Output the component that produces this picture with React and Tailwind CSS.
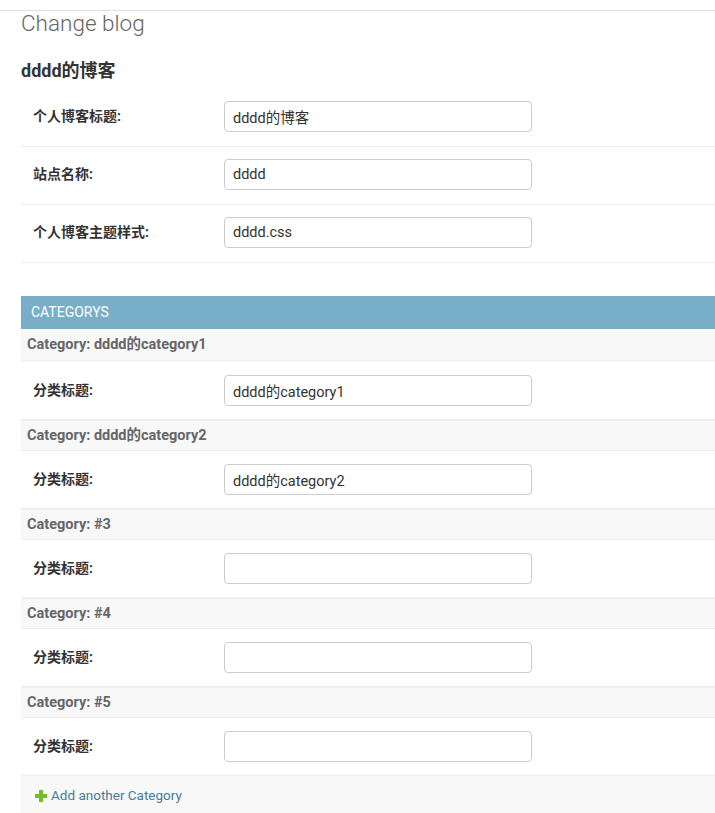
import React from "react";

const font = { fontFamily: 'Roboto, "Noto Sans CJK SC", sans-serif' };

function FieldRow({ label, value, inline, tall }) {
    const rowClass = inline
        ? "flex items-center " + (tall ? "h-[58px]" : "h-[57px]")
        : "flex items-start pt-[12px] h-[58px] border-b border-[#eee]";
    return (
        <div className={rowClass}>
            <label className="w-[203px] pl-3 text-[14px] font-bold text-[#333] leading-[31px]">{label}</label>
            <input
                readOnly
                value={value}
                className="w-[308px] h-[31px] border border-[#ccc] rounded-[4px] px-2 text-[14.5px] text-[#333] outline-none"
                style={font}
            />
        </div>
    );
}

function InlineItem({ title, value, first }) {
    return (
        <div>
            <div className={"flex items-center h-[32px] bg-[#f8f8f8] border-b border-[#eee] px-[6px] text-[14.5px] font-bold text-[#666] " + (first ? "" : "border-t-2 border-t-[#eee]")}>
                {title}
            </div>
            <FieldRow label="分类标题:" value={value} inline tall={first} />
        </div>
    );
}

function PlusIcon() {
    return (
        <svg width="12" height="12" viewBox="0 0 12 12">
            <rect x="4" y="0" width="4" height="12" fill="#70bf2b" />
            <rect x="0" y="4" width="12" height="4" fill="#70bf2b" />
        </svg>
    );
}

export default function App() {
    const categories = [
        { title: "Category: dddd的category1", value: "dddd的category1" },
        { title: "Category: dddd的category2", value: "dddd的category2" },
        { title: "Category: #3", value: "" },
        { title: "Category: #4", value: "" },
        { title: "Category: #5", value: "" },
    ];

    return (
        <div className="bg-white min-h-screen pt-[10px] overflow-hidden" style={font}>
            <div className="border-t border-[#e0e0e0] pl-[21px]">
                <h1 className="text-[22.5px] font-light text-[#666] leading-[22px] pt-[1px]">Change blog</h1>
                <h2 className="mt-[27px] text-[18px] font-bold text-[#333] leading-[20px]">dddd的博客</h2>

                <div className="mt-[8px]">
                    <FieldRow label="个人博客标题:" value="dddd的博客" />
                    <FieldRow label="站点名称:" value="dddd" />
                    <FieldRow label="个人博客主题样式:" value="dddd.css" />
                </div>

                <div className="mt-[33px]">
                    <div className="flex items-center h-[33px] bg-[#79aec8] pl-[10px] text-[14px] text-white uppercase">
                        Categorys
                    </div>
                    {categories.map((c, i) => (
                        <InlineItem key={i} title={c.title} value={c.value} first={i === 0} />
                    ))}
                    <div className="flex items-center gap-[4px] h-[40px] bg-[#f8f8f8] border-t border-[#eee] pl-[14px]">
                        <PlusIcon />
                        <a href="#" className="text-[13.5px] text-[#447e9b]">Add another Category</a>
                    </div>
                </div>
            </div>
        </div>
    );
}
